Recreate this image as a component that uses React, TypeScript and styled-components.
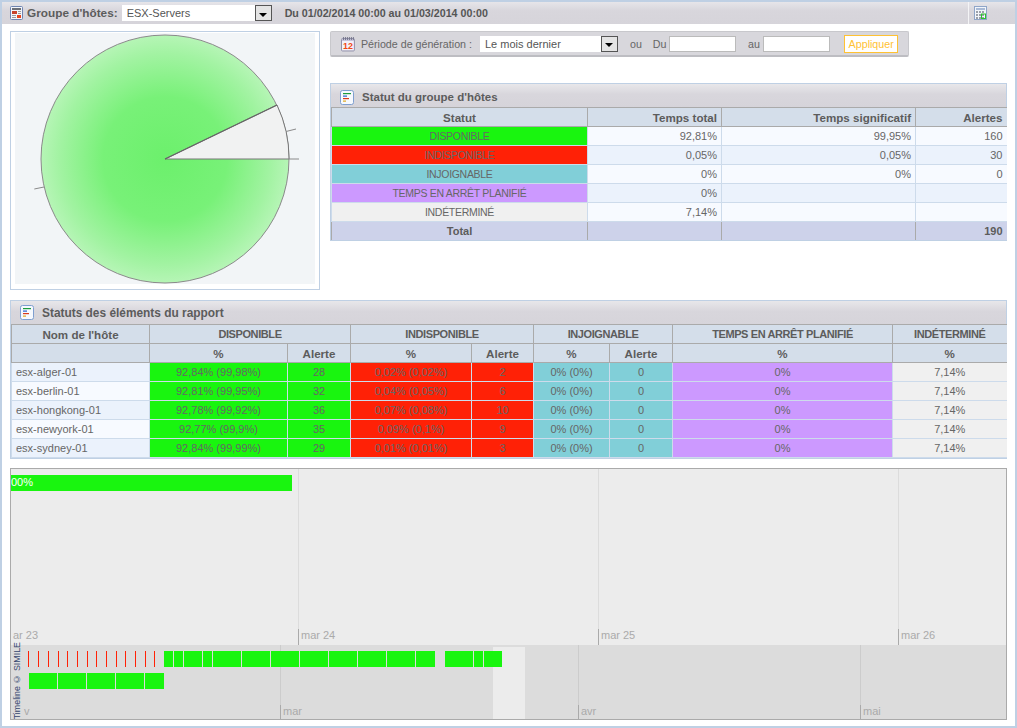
import React, { FC } from "react"
import styled, { createGlobalStyle } from "styled-components"

const GREEN = "#19f50f"
const RED = "#ff2106"
const TEAL = "#81cfd8"
const PURPLE = "#cc99ff"
const GREY = "#f0f0f0"

const GlobalStyle = createGlobalStyle`
  html, body {
    margin: 0;
    padding: 0;
    background: #fff;
    font-family: "Liberation Sans", Arial, sans-serif;
    font-size: 11px;
    color: #666;
  }
`

const Page = styled.div`
  box-sizing: border-box;
  width: 1017px;
  height: 728px;
  overflow: hidden;
  border: 2px solid #bfd0e4;
  background: #fff;
`

const TopBar = styled.div`
  display: flex;
  align-items: center;
  height: 22px;
  padding-left: 8px;
  background: linear-gradient(#e6e5e9, #d8d6dc 40%, #d6d4da);
  font-weight: bold;
  color: #5c5c5c;
`

const GroupLabel = styled.span`
  margin-left: 4px;
  margin-right: 4px;
  font-size: 11.8px;
`

const DateRange = styled.span`
  margin-left: 13px;
  font-size: 10.7px;
  color: #555;
`

const BarAction = styled.div`
  display: flex;
  align-items: center;
  margin-left: auto;
  height: 100%;
  width: 47px;
  padding-left: 5px;
  box-sizing: border-box;
  border-left: 1px solid #f4f4f6;
`

const FakeSelect = styled.div<{ $w: number }>`
  box-sizing: border-box;
  display: flex;
  align-items: center;
  justify-content: space-between;
  width: ${(p) => p.$w}px;
  height: 16px;
  padding-left: 5px;
  background: #fff;
  font-weight: normal;
  font-size: 11px;
  color: #555;
`

const SelectArrow = styled.span`
  box-sizing: border-box;
  display: flex;
  align-items: center;
  justify-content: center;
  width: 17px;
  height: 16px;
  border: 1px solid #555;
  background: #e4e4e4;
  &::after {
    content: "";
    margin-top: 3px;
    border-left: 4px solid transparent;
    border-right: 4px solid transparent;
    border-top: 4px solid #000;
  }
`

const Content = styled.div`
  padding: 7px 8px 0 8px;
`

const TopRow = styled.div`
  display: flex;
  align-items: flex-start;
  gap: 10px;
`

const ChartBox = styled.div`
  box-sizing: border-box;
  width: 310px;
  height: 259px;
  border: 1px solid #bfd0e4;
  background: #fff;
  padding: 1px 4px 5px 4px;
  flex: none;
`

const ChartSvg = styled.svg`
  display: block;
  width: 300px;
  height: 251px;
  background: #f2f5f7;
`

const RightColumn = styled.div`
  flex: 1;
  min-width: 0;
`

const PeriodBar = styled.div`
  box-sizing: border-box;
  display: flex;
  align-items: center;
  width: 579px;
  height: 26px;
  padding: 0 10px 0 9px;
  background: #d8d7dc;
  border: 1px solid #c8c8cc;
  border-bottom: 2px solid #bdbdc2;
  border-radius: 2px;
  color: #666;
  font-size: 10.7px;
`

const PeriodLabel = styled.span`
  margin-left: 5px;
  margin-right: 8px;
  white-space: nowrap;
`

const PeriodWord = styled.span<{ $l: number; $r: number }>`
  margin-left: ${(p) => p.$l}px;
  margin-right: ${(p) => p.$r}px;
`

const DateInput = styled.div`
  box-sizing: border-box;
  width: 68px;
  height: 16px;
  background: #fff;
  border: 1px solid #bbb;
`

const ApplyButton = styled.button`
  box-sizing: border-box;
  width: 54px;
  height: 18px;
  margin-left: 14px;
  padding: 0;
  background: #fff;
  border: 1px solid #ffc233;
  color: #ffc233;
  font: 10.7px "Liberation Sans", Arial, sans-serif;
`

const Panel = styled.section<{ $mt: number }>`
  margin-top: ${(p) => p.$mt}px;
  border: 1px solid #bfd0e4;
  background: #fff;
`

const PanelTitle = styled.h3<{ $low?: boolean }>`
  display: flex;
  align-items: center;
  box-sizing: border-box;
  height: 23px;
  margin: 0;
  padding-left: 9px;
  padding-top: ${(p) => (p.$low ? 3 : 0)}px;
  gap: 8px;
  background: linear-gradient(#e8e7ea, #d8d6dc 45%, #d6d4da);
  font-size: ${(p) => (p.$low ? 11.5 : 11.9)}px;
  font-weight: bold;
  color: #5c5c5c;
`

const Table = styled.table`
  width: 100%;
  table-layout: fixed;
  border-collapse: collapse;
  font-size: 11px;
`

const Col = styled.col<{ $w: number }>`
  width: ${(p) => p.$w}px;
`

const Th = styled.th<{ $align?: string; $caps?: boolean }>`
  height: 18px;
  padding: 0 4px;
  background: #d4deea;
  border: 1px solid #aaa;
  color: #5c5c5c;
  font-size: ${(p) => (p.$caps ? 11 : 11.6)}px;
  letter-spacing: ${(p) => (p.$caps ? "-0.4px" : "0")};
  font-weight: bold;
  text-align: ${(p) => p.$align || "center"};
  white-space: nowrap;
  &:last-child { border-right: none; }
`

const Td = styled.td<{ $bg?: string; $align?: string }>`
  height: 18px;
  padding: 0 4px;
  background: ${(p) => p.$bg || "transparent"};
  border: 1px solid #cddbeb;
  color: #666;
  text-align: ${(p) => p.$align || "center"};
  white-space: nowrap;
  overflow: hidden;
  &:last-child { border-right: none; }
`

const StatusCell = styled(Td)`
  font-size: 10.5px;
  letter-spacing: -0.3px;
`

const Row = styled.tr<{ $even: boolean }>`
  background: ${(p) => (p.$even ? "#ebf2fc" : "#f7faff")};
`

const TotalCell = styled.td<{ $align?: string }>`
  height: 18px;
  padding: 0 4px;
  background: #cdd2ea;
  border: 1px solid #aaa;
  border-bottom: none;
  color: #5c5c5c;
  font-size: 11px;
  font-weight: bold;
  text-align: ${(p) => p.$align || "center"};
  &:last-child { border-right: none; }
`

const Timeline = styled.div`
  box-sizing: border-box;
  width: 997px;
  height: 252px;
  margin-top: 9px;
  border: 1px solid #aaa;
  overflow: hidden;
  background: #ececec;
`

const DetailBand = styled.div`
  display: grid;
  grid-template-columns: 287px 300px 300px 1fr;
  height: 176px;
`

const OverviewBand = styled.div`
  position: relative;
  display: grid;
  grid-template-columns: 269px 298px 282px 1fr;
  height: 74px;
  background: #dcdcdc;
`

const Slot = styled.div<{ $line?: string; $spread?: boolean }>`
  display: flex;
  flex-direction: column;
  justify-content: ${(p) => (p.$spread ? "space-between" : "flex-end")};
  min-width: 0;
  border-left: ${(p) => (p.$line ? `1px solid ${p.$line}` : "none")};
`

const SlotLabel = styled.span<{ $h: number; $tick?: boolean }>`
  box-sizing: border-box;
  height: ${(p) => p.$h}px;
  margin-left: ${(p) => (p.$tick ? -1 : 0)}px;
  padding-left: 2px;
  border-left: ${(p) => (p.$tick ? "1px solid #aaa" : "none")};
  color: #aaa;
  font-size: 11px;
  line-height: 13px;
  white-space: nowrap;
`

const HiddenStart = styled(SlotLabel)`
  padding-left: 13px;
`

const MainBar = styled.div`
  width: 281px;
  height: 16px;
  margin-top: 6px;
  background: ${GREEN};
  color: #fff;
  font-size: 11px;
  line-height: 15px;
  overflow: hidden;
`

const Highlight = styled.div`
  position: absolute;
  left: 482px;
  width: 32px;
  top: 2px;
  bottom: 0;
  background: #ececec;
`

const EventLayer = styled.div`
  position: absolute;
  left: 0;
  top: 6px;
  display: flex;
  flex-direction: column;
  gap: 6px;
`

const EventRow = styled.div`
  display: flex;
  height: 16px;
`

const EventMark = styled.div<{ $gap: number; $w: number; $red?: boolean }>`
  flex: none;
  margin-left: ${(p) => p.$gap}px;
  width: ${(p) => p.$w}px;
  background: ${(p) => (p.$red ? RED : GREEN)};
`

const Credit = styled.span`
  position: absolute;
  left: 1px;
  bottom: 0;
  writing-mode: vertical-rl;
  transform: rotate(180deg);
  color: #35466f;
  font-size: 8.9px;
  line-height: 11px;
  white-space: nowrap;
`

const ReportIcon: FC = () => (
  <svg width="13" height="14" viewBox="0 0 13 14">
    <rect x="0.5" y="0.5" width="12" height="13" rx="1" fill="#f4f6fa" stroke="#6f84b0" />
    <rect x="2" y="2" width="9" height="2" fill="#6d7078" />
    <rect x="2" y="5" width="5" height="3" fill="#c8442a" />
    <rect x="8" y="5" width="3" height="1" fill="#9a9a9a" />
    <rect x="8" y="7" width="3" height="1" fill="#9a9a9a" />
    <rect x="2" y="9" width="4" height="1" fill="#9a9a9a" />
    <rect x="2" y="11" width="4" height="1" fill="#9a9a9a" />
    <rect x="7" y="9" width="4" height="3" fill="#e8431c" />
  </svg>
)

const GridIcon: FC = () => (
  <svg width="13" height="14" viewBox="0 0 13 14">
    <rect x="0.5" y="0.5" width="12" height="13" fill="#f2f5fa" stroke="#8fa5c8" />
    <rect x="2" y="2" width="9" height="2" fill="#a9bad6" />
    {[2, 5, 8].map((x) =>
      [5, 8, 11].map((y) => <rect key={`${x}-${y}`} x={x} y={y} width="2" height="2" fill="#9ba0aa" />)
    )}
    <rect x="7.5" y="8" width="4" height="4.5" fill="none" stroke="#2cc52c" />
  </svg>
)

const CalendarIcon: FC = () => (
  <svg width="16" height="16" viewBox="0 0 16 16">
    <rect x="1.5" y="2.5" width="13" height="12.500" rx="1" fill="#f3f1fa" stroke="#8f8fa8" />
    <rect x="2" y="3" width="12" height="2" fill="#c9c6dc" />
    {[3, 5, 7, 9, 11, 13].map((x) => (
      <rect key={x} x={x} y="1" width="1" height="3" fill="#77778c" />
    ))}
    <text x="8" y="13" textAnchor="middle" fontFamily="Liberation Sans" fontWeight="bold" fontSize="9" fill="#f04a14">
      12
    </text>
  </svg>
)

const StatusIcon: FC = () => (
  <svg width="14" height="15" viewBox="0 0 14 15">
    <rect x="0.5" y="0.5" width="13" height="14" rx="2" fill="#f6f9fe" stroke="#7f9fd0" />
    <rect x="3" y="3" width="8" height="1.2" fill="#1c9c3c" />
    <rect x="3" y="5.500" width="4" height="1.2" fill="#2a62c8" />
    <rect x="3" y="8" width="6" height="1.2" fill="#d83a1c" />
    <rect x="3" y="10.500" width="3" height="1.2" fill="#e0a81c" />
  </svg>
)

const PieChart: FC = () => (
  <ChartSvg viewBox="0 0 300 251">
    <defs>
      <radialGradient id="pieGlow" gradientUnits="userSpaceOnUse" cx="150" cy="126" r="124">
        <stop offset="0" stopColor="#6cf06c" />
        <stop offset="0.5" stopColor="#78f178" />
        <stop offset="0.85" stopColor="#a2f3a2" />
        <stop offset="1" stopColor="#b6f5b6" />
      </radialGradient>
    </defs>
    <circle cx="150" cy="126" r="124" fill="url(#pieGlow)" stroke="#8a8a8a" strokeWidth="1" />
    <path d="M150 126 L262 72 A124 124 0 0 1 274 126 Z" fill="#f1f2f2" stroke="#777" strokeWidth="1" />
    <path d="M150 126 L262 72" stroke="#666" strokeWidth="1.2" />
    <path d="M274 126 H284 M271 98.500 L281 96 M29 154 L19.300 156" stroke="#8a8a8a" strokeWidth="1" fill="none" />
  </ChartSvg>
)

const summary = [
  { label: "DISPONIBLE", color: GREEN, total: "92,81%", sig: "99,95%", alerts: "160" },
  { label: "INDISPONIBLE", color: RED, total: "0,05%", sig: "0,05%", alerts: "30" },
  { label: "INJOIGNABLE", color: TEAL, total: "0%", sig: "0%", alerts: "0" },
  { label: "TEMPS EN ARRÊT PLANIFIÉ", color: PURPLE, total: "0%", sig: "", alerts: "" },
  { label: "INDÉTERMINÉ", color: GREY, total: "7,14%", sig: "", alerts: "" },
]

const hosts = [
  { name: "esx-alger-01", up: "92,84% (99,98%)", upA: "28", down: "0,02% (0,02%)", downA: "2" },
  { name: "esx-berlin-01", up: "92,81% (99,95%)", upA: "32", down: "0,04% (0,05%)", downA: "6" },
  { name: "esx-hongkong-01", up: "92,78% (99,92%)", upA: "36", down: "0,07% (0,08%)", downA: "10" },
  { name: "esx-newyork-01", up: "92,77% (99,9%)", upA: "35", down: "0,09% (0,1%)", downA: "9" },
  { name: "esx-sydney-01", up: "92,84% (99,99%)", upA: "29", down: "0,01% (0,01%)", downA: "3" },
]

const redMarks: number[][] = [17, 27, 37, 47, 56, 66, 76, 85, 95, 105, 114, 124, 134, 143].map((x) => [x, 1])

// [left, width] on the overview band
const firstRow = [
  [153, 9], [163, 9], [173, 18], [192, 9], [202, 28], [231, 28], [260, 28], [289, 28],
  [318, 28], [347, 28], [376, 28], [405, 19], [434, 28], [463, 9], [473, 18],
]
const secondRow = [[18, 28], [47, 28], [76, 28], [105, 28], [134, 19]]

const Events: FC<{ items: number[][] }> = ({ items }) => (
  <EventRow>
    {items.map(([x, w], i) => {
      const prev = items[i - 1]
      const gap = prev ? x - prev[0] - prev[1] : x
      return <EventMark key={x} $gap={gap} $w={w} $red={w === 1} />
    })}
  </EventRow>
)

const App: FC = () => (
  <Page>
    <GlobalStyle />
    <TopBar>
      <ReportIcon />
      <GroupLabel>Groupe d'hôtes:</GroupLabel>
      <FakeSelect $w={150}>
        ESX-Servers
        <SelectArrow />
      </FakeSelect>
      <DateRange>Du 01/02/2014 00:00 au 01/03/2014 00:00</DateRange>
      <BarAction>
        <GridIcon />
      </BarAction>
    </TopBar>
    <Content>
      <TopRow>
        <ChartBox>
          <PieChart />
        </ChartBox>
        <RightColumn>
          <PeriodBar>
            <CalendarIcon />
            <PeriodLabel>Période de génération :</PeriodLabel>
            <FakeSelect $w={139}>
              Le mois dernier
              <SelectArrow />
            </FakeSelect>
            <PeriodWord $l={12} $r={11}>ou</PeriodWord>
            <PeriodWord $l={0} $r={2}>Du</PeriodWord>
            <DateInput />
            <PeriodWord $l={12} $r={3}>au</PeriodWord>
            <DateInput />
            <ApplyButton>Appliquer</ApplyButton>
          </PeriodBar>
          <Panel $mt={26}>
            <PanelTitle $low>
              <StatusIcon />
              Statut du groupe d'hôtes
            </PanelTitle>
            <Table>
              <colgroup>
                <Col $w={256} />
                <Col $w={134} />
                <Col $w={194} />
                <Col $w={91} />
              </colgroup>
              <thead>
                <tr>
                  <Th>Statut</Th>
                  <Th $align="right">Temps total</Th>
                  <Th $align="right">Temps significatif</Th>
                  <Th $align="right">Alertes</Th>
                </tr>
              </thead>
              <tbody>
                {summary.map((s, i) => (
                  <Row key={s.label} $even={i % 2 === 1}>
                    <StatusCell $bg={s.color}>{s.label}</StatusCell>
                    <Td $align="right">{s.total}</Td>
                    <Td $align="right">{s.sig}</Td>
                    <Td $align="right">{s.alerts}</Td>
                  </Row>
                ))}
                <tr>
                  <TotalCell>Total</TotalCell>
                  <TotalCell />
                  <TotalCell />
                  <TotalCell $align="right">190</TotalCell>
                </tr>
              </tbody>
            </Table>
          </Panel>
        </RightColumn>
      </TopRow>
      <Panel $mt={10}>
        <PanelTitle>
          <StatusIcon />
          Statuts des éléments du rapport
        </PanelTitle>
        <Table>
          <colgroup>
            <Col $w={138} />
            <Col $w={138} />
            <Col $w={63} />
            <Col $w={121} />
            <Col $w={62} />
            <Col $w={76} />
            <Col $w={63} />
            <Col $w={220} />
            <Col $w={114} />
          </colgroup>
          <thead>
            <tr>
              <Th>Nom de l'hôte</Th>
              <Th $caps colSpan={2}>DISPONIBLE</Th>
              <Th $caps colSpan={2}>INDISPONIBLE</Th>
              <Th $caps colSpan={2}>INJOIGNABLE</Th>
              <Th $caps>TEMPS EN ARRÊT PLANIFIÉ</Th>
              <Th $caps>INDÉTERMINÉ</Th>
            </tr>
            <tr>
              <Th />
              <Th>%</Th>
              <Th>Alerte</Th>
              <Th>%</Th>
              <Th>Alerte</Th>
              <Th>%</Th>
              <Th>Alerte</Th>
              <Th>%</Th>
              <Th>%</Th>
            </tr>
          </thead>
          <tbody>
            {hosts.map((h, i) => (
              <Row key={h.name} $even={i % 2 === 0}>
                <Td $align="left">{h.name}</Td>
                <Td $bg={GREEN}>{h.up}</Td>
                <Td $bg={GREEN}>{h.upA}</Td>
                <Td $bg={RED}>{h.down}</Td>
                <Td $bg={RED}>{h.downA}</Td>
                <Td $bg={TEAL}>0% (0%)</Td>
                <Td $bg={TEAL}>0</Td>
                <Td $bg={PURPLE}>0%</Td>
                <Td $bg={GREY}>7,14%</Td>
              </Row>
            ))}
          </tbody>
        </Table>
      </Panel>
      <Timeline>
        <DetailBand>
          <Slot $spread>
            <MainBar>00%</MainBar>
            <SlotLabel $h={16}>ar 23</SlotLabel>
          </Slot>
          <Slot $line="#dcdcdc"><SlotLabel $h={16} $tick>mar 24</SlotLabel></Slot>
          <Slot $line="#dcdcdc"><SlotLabel $h={16} $tick>mar 25</SlotLabel></Slot>
          <Slot $line="#dcdcdc"><SlotLabel $h={16} $tick>mar 26</SlotLabel></Slot>
        </DetailBand>
        <OverviewBand>
          <Slot><HiddenStart $h={14}>v</HiddenStart></Slot>
          <Slot $line="#cccccc"><SlotLabel $h={14} $tick>mar</SlotLabel></Slot>
          <Slot $line="#cccccc"><SlotLabel $h={14} $tick>avr</SlotLabel></Slot>
          <Slot $line="#cccccc"><SlotLabel $h={14} $tick>mai</SlotLabel></Slot>
          <Highlight />
          <EventLayer>
            <Events items={[...redMarks, ...firstRow]} />
            <Events items={secondRow} />
          </EventLayer>
          <Credit>Timeline © SIMILE</Credit>
        </OverviewBand>
      </Timeline>
    </Content>
  </Page>
)

export default App
